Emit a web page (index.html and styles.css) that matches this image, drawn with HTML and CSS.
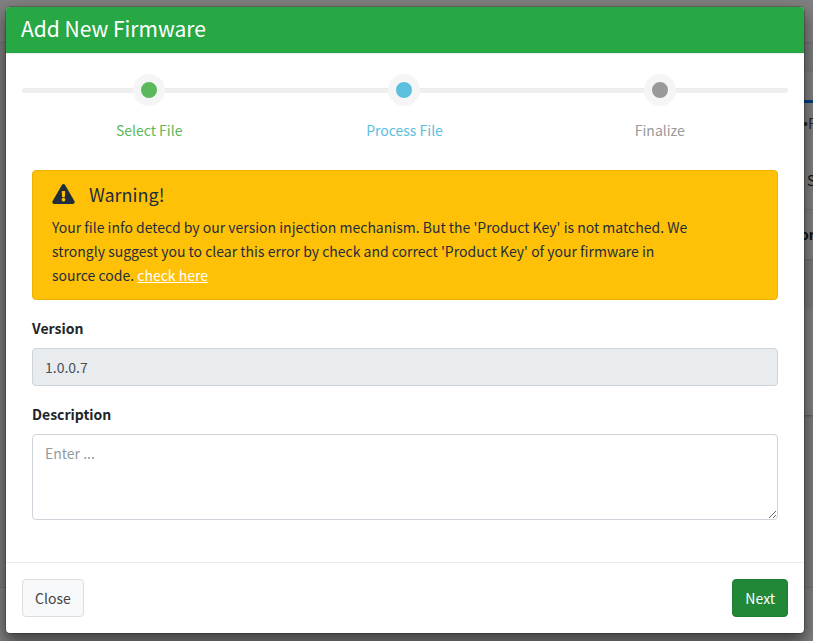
FILE: index.html
```html
<!DOCTYPE html>
<html lang="en">
<head>
<meta charset="utf-8">
<title>Add New Firmware</title>
<link rel="stylesheet" href="styles.css">
</head>
<body>
<div class="page" aria-hidden="true">
  <div class="page-nav"></div>
  <div class="page-content">
    <div class="page-card">
      <div class="card-top"></div>
      <div class="card-tabs"><span class="bullet">•</span>F</div>
      <div class="card-tools">S</div>
      <div class="card-head">or</div>
      <div class="card-row"></div>
      <div class="card-rest"></div>
    </div>
  </div>
  <div class="page-footer"></div>
</div>
<div class="backdrop">
  <form class="modal" role="dialog" aria-labelledby="title">
    <header class="modal-header"><h1 id="title">Add New Firmware</h1></header>
    <div class="modal-body">
      <ol class="steps">
        <li class="step done"><span class="dot"></span><span>Select File</span></li>
        <li class="step active"><span class="dot"></span><span>Process File</span></li>
        <li class="step"><span class="dot"></span><span>Finalize</span></li>
      </ol>
      <div class="fields">
        <section class="alert">
          <h2>
            <svg class="alert-icon" viewBox="0 0 576 512" aria-hidden="true"><path fill="currentColor" d="M569.517 440.013C587.975 472.007 564.806 512 527.94 512H48.054c-36.937 0-59.999-40.055-41.577-71.987L246.423 23.985c18.467-32.009 64.72-31.951 83.154 0l239.94 416.028zM288 354c-25.405 0-46 20.595-46 46s20.595 46 46 46 46-20.595 46-46-20.595-46-46-46zm-43.673-165.346l7.418 136c.347 6.364 5.609 11.346 11.982 11.346h48.546c6.373 0 11.635-4.982 11.982-11.346l7.418-136c.375-6.874-5.098-12.654-11.982-12.654h-63.383c-6.884 0-12.356 5.78-11.981 12.654z"/></svg>
            Warning!
          </h2>
          <p>Your file info detecd by our version injection mechanism. But the 'Product Key' is not matched. We<br>strongly suggest you to clear this error by check and correct 'Product Key' of your firmware in<br>source code. <a href="#">check here</a></p>
        </section>
        <div class="group">
          <label for="version">Version</label>
          <input id="version" class="control" type="text" value="1.0.0.7" readonly>
        </div>
        <div class="group">
          <label for="description">Description</label>
          <textarea id="description" class="control" rows="3" placeholder="Enter ..."></textarea>
        </div>
      </div>
    </div>
    <footer class="modal-footer">
      <button type="button" class="btn btn-light">Close</button>
      <button type="button" class="btn btn-success">Next</button>
    </footer>
  </form>
</div>
</body>
</html>
```
FILE: styles.css
```css
* { box-sizing: border-box; }

body {
  margin: 0;
  overflow: hidden;
  color: #212529;
  font: 14px/24px "Noto Sans CJK SC", "Open Sans", sans-serif;
}

h1, h2, p, ol { margin: 0; padding: 0; font-weight: 400; }

/* Page behind the dialog */
.page {
  position: absolute;
  inset: 0;
  display: flex;
  flex-direction: column;
  overflow: hidden;
  background: #f4f6f9;
}
.page-nav { height: 43px; background: #fff; border-bottom: 1px solid #dee2e6; }
.page-content { flex: 1; padding-top: 29px; }
.page-card {
  width: 10px;
  margin-left: auto;
  overflow: hidden;
  background: #fff;
  box-shadow: 0 1px 3px rgba(0, 0, 0, .3);
  white-space: nowrap;
}
.card-top { height: 31px; border-bottom: 3px solid #007bff; }
.card-tabs { height: 65px; padding-top: 8px; color: #495057; }
.bullet { font-family: "Liberation Sans", sans-serif; }
.card-tools { height: 42px; padding-left: 4px; border-bottom: 1px solid #dee2e6; }
.card-head { height: 51px; padding-top: 12px; text-indent: -3px; font-weight: 700; border-bottom: 2px solid #dee2e6; }
.card-row { height: 48px; background: #f2f2f2; }
.card-rest { height: 106px; }
.page-footer { height: 54px; background: #fff; border-top: 1px solid #dee2e6; }

/* Dialog */
.backdrop {
  position: absolute;
  inset: 0;
  padding: 6px 8px 7px 5px;
  background: rgba(0, 0, 0, .5);
}
.modal {
  background: #fff;
  background-clip: padding-box;
  border: 1px solid rgba(0, 0, 0, .2);
  border-radius: 5px;
  box-shadow: 0 8px 16px rgba(0, 0, 0, .5);
}
.modal-header {
  padding: 6px 15px 10px;
  color: #fff;
  background: #28a745;
  border-bottom: 1px solid #e9ecef;
  border-radius: 4px 4px 0 0;
}
.modal-header h1 { font-size: 21px; line-height: 30px; }
.modal-body { padding: 20px 16px 16px; }

.steps {
  position: relative;
  display: grid;
  grid-template-columns: repeat(3, 1fr);
  list-style: none;
}
.steps::before {
  content: "";
  position: absolute;
  top: 14px;
  left: 0;
  right: 0;
  height: 5px;
  background: #eee;
  border-radius: 2px;
}
.step {
  display: flex;
  flex-direction: column;
  align-items: center;
  gap: 12px;
  padding-right: 1px;
  color: #999;
}
.done { color: #5cb85c; }
.active { color: #5bc0de; }
.dot {
  position: relative;
  width: 32px;
  height: 32px;
  border: 8px solid #f5f5f5;
  border-radius: 50%;
  background: currentColor;
}

.fields { padding: 28px 10px 10px; }
.alert {
  margin-bottom: 16px;
  padding: 11px 19px 12px;
  color: #1f2d3d;
  background: #ffc107;
  border: 1px solid #edb100;
  border-radius: 4px;
}
.alert h2 {
  display: flex;
  align-items: center;
  gap: 14px;
  margin-bottom: 9px;
  font-size: 18px;
}
.alert-icon { width: 23px; height: 20px; }
.alert a { color: #fff; text-decoration: underline; }

.group { margin-bottom: 16px; }
.group label { display: block; margin-bottom: 8px; font-weight: 700; }
.control {
  display: block;
  width: 100%;
  height: 38px;
  padding: 6px 12px;
  color: #495057;
  font: inherit;
  background: #fff;
  border: 1px solid #ced4da;
  border-radius: 4px;
}
.control:read-only { background: #e9ecef; }
textarea.control { height: 86px; resize: vertical; }
.control::placeholder { color: #939ba2; }

.modal-footer {
  display: flex;
  justify-content: space-between;
  padding: 16px;
  border-top: 1px solid #e9ecef;
}
.btn {
  height: 38px;
  padding: 0 12px;
  font: inherit;
  border: 1px solid #ddd;
  border-radius: 4px;
}
.btn-light { color: #444; background: #f8f9fa; }
.btn-success { color: #fff; background: #218838; border-color: #1e7e34; }
```
